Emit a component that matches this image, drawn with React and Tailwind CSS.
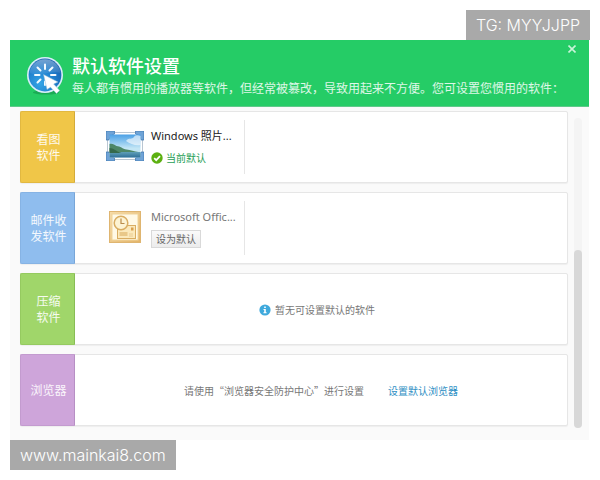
import clsx from 'clsx'

const CATEGORIES = [
  {
    id: 'image',
    lines: ['看图', '软件'],
    color: 'bg-[#f0c648] border-[#e2b840] border-r-[#d3ab3a]',
    app: { name: 'Windows 照片...', icon: PhotoIcon, isDefault: true },
  },
  {
    id: 'mail',
    lines: ['邮件收', '发软件'],
    color: 'bg-[#8fbdee] border-[#86b3e4] border-r-[#78a6d8]',
    app: { name: 'Microsoft Offic...', icon: OutlookIcon, isDefault: false },
  },
  {
    id: 'zip',
    lines: ['压缩', '软件'],
    color: 'bg-[#a0d66a] border-[#95ca60] border-r-[#88bd55]',
    empty: '暂无可设置默认的软件',
  },
  {
    id: 'browser',
    lines: ['浏览器'],
    color: 'bg-[#cea5da] border-[#c39bcf] border-r-[#b78fc4]',
    hint: '请使用“浏览器安全防护中心”进行设置',
    link: '设置默认浏览器',
  },
]

function ClickLogo() {
  return (
    <svg className="w-10 h-10 shrink-0" viewBox="0 0 40 40" aria-hidden="true">
      <defs>
        <radialGradient id="logoBlue" cx="0.35" cy="0.75" r="0.8">
          <stop offset="0" stopColor="#35a5e6" />
          <stop offset="0.6" stopColor="#1d7ccb" />
          <stop offset="1" stopColor="#1960ae" />
        </radialGradient>
        <linearGradient id="logoGloss" x1="0" y1="0" x2="0" y2="1">
          <stop offset="0" stopColor="#fff" stopOpacity="0.4" />
          <stop offset="1" stopColor="#fff" stopOpacity="0.05" />
        </linearGradient>
      </defs>
      <ellipse cx="21" cy="37.5" rx="13" ry="2" fill="#128a44" opacity="0.5" />
      <circle cx="20" cy="20" r="18" fill="#d9eefa" />
      <circle cx="20" cy="20" r="16.4" fill="url(#logoBlue)" />
      <path d="M4.5 18a15.6 15.6 0 0 1 31 0C27 15 14 22 4.5 18z" fill="url(#logoGloss)" />
      <path
        d="M20 9.500v4.500M12.500 12.500l3 3M27.500 12.500l-3 3M10 20h4.500M30.500 20h-4.500M12.500 27.500l3-3M20 30v-3.500"
        fill="none"
        stroke="#f4fbff"
        strokeWidth="2"
        strokeLinecap="round"
      />
      <path d="M18.500 19.500L33 27l-4.300 2 6 6.500-3.200 3-6-6.300L22 34.500z" fill="#fff" stroke="#8fb6d2" strokeWidth="0.5" />
    </svg>
  )
}

function PhotoIcon() {
  return (
    <svg className="w-[38px] h-[30px] shrink-0" viewBox="0 0 38 30" aria-hidden="true">
      <defs>
        <linearGradient id="sky" x1="0" y1="0" x2="0" y2="1">
          <stop offset="0" stopColor="#4aa0e6" />
          <stop offset="0.6" stopColor="#c3e6f5" />
        </linearGradient>
        <linearGradient id="sea" x1="0" y1="0" x2="0" y2="1">
          <stop offset="0" stopColor="#5f9fb8" />
          <stop offset="1" stopColor="#2f6f98" />
        </linearGradient>
      </defs>
      <rect x="1.5" y="1.5" width="35" height="27" fill="#fff" stroke="#b9c6d2" />
      <path
        d="M0 0h8.500v3L6 4 4 6 3 9H0zM38 0h-8.500v3l2.500 1 2 2 1 3H38zM0 30h8.500v-3L6 26l-2-2-1-3H0zM38 30h-8.500v-3l2.500-1 2-2 1-3H38z"
        fill="#6fa3d6"
        stroke="#3d74ad"
        strokeWidth="0.7"
      />
      <rect x="3.5" y="3.5" width="31" height="23" fill="url(#sky)" />
      <path d="M20 10c3-4 6-1 8-4s5-1 6.500-1v9c-5 1-10-1-14.500-4z" fill="#fff" opacity="0.6" />
      <path d="M3.500 21h31v5.500h-31z" fill="url(#sea)" />
      <path d="M3.500 13c3-1 5 1 7 2 4 0 6 3 10 3.500 4 .5 8 2 12 2.500h-29z" fill="#4d8768" />
      <path d="M3.500 17c4 0 6 3 12 5h-12z" fill="#35694c" />
    </svg>
  )
}

function OutlookIcon() {
  return (
    <svg className="w-8 h-8 shrink-0" viewBox="0 0 32 32" aria-hidden="true">
      <defs>
        <linearGradient id="gold" x1="0" y1="0" x2="1" y2="1">
          <stop offset="0" stopColor="#f6dcaa" />
          <stop offset="1" stopColor="#e3b468" />
        </linearGradient>
      </defs>
      <rect x="0.5" y="0.5" width="31" height="31" fill="url(#gold)" stroke="#dfb570" />
      <rect x="3" y="3" width="26" height="26" fill="#fff9e6" stroke="#f0d49a" />
      <rect x="8.500" y="14.500" width="18" height="13" fill="#fbe9bb" stroke="#d9ad62" />
      <rect x="10.500" y="21" width="8" height="4" fill="#e9c888" />
      <rect x="22" y="16.500" width="2.500" height="3" fill="#d9a04f" />
      <path d="M20 23h4M20 25h4" stroke="#eacb90" />
      <circle cx="12" cy="12" r="6.800" fill="#fdf3d2" stroke="#d9ad62" strokeWidth="1.500" />
      <path d="M12 7.500V12.500h3.500" fill="none" stroke="#b98b4a" strokeWidth="1.200" />
    </svg>
  )
}

function CheckIcon() {
  return (
    <svg className="w-3 h-3 shrink-0" viewBox="0 0 12 12" aria-hidden="true">
      <circle cx="6" cy="6" r="5.700" fill="#5cb010" />
      <path d="M3.200 6.200l2 2 3.800-4" fill="none" stroke="#fff" strokeWidth="1.700" />
    </svg>
  )
}

function InfoIcon() {
  return (
    <svg className="w-3 h-3 shrink-0" viewBox="0 0 12 12" aria-hidden="true">
      <circle cx="6" cy="6" r="5.600" fill="#3fa9dc" />
      <path d="M5.200 2.500h1.600v1.500H5.200zM4.500 5h2.300v3.200h.8v1H4.400v-1h.8V6h-.7z" fill="#fff" />
    </svg>
  )
}

function AppItem({ app }) {
  const Icon = app.icon
  return (
    <div className="w-[170px] my-2 flex items-center border-r border-[#e6e6e6]">
      <div className="w-[76px] pl-6 pb-0.5 flex justify-center shrink-0">
        <Icon />
      </div>
      <div className="min-w-0 pt-0.5">
        <p className={clsx('text-[11px] leading-4 whitespace-nowrap', app.isDefault ? 'text-[#222]' : 'text-[#777]')}>{app.name}</p>
        <div className="h-5 mt-1 flex items-center">
          {app.isDefault ? (
            <span className="flex items-center gap-[3px] text-[10px] leading-4 text-[#1f9e55]">
              <CheckIcon />
              当前默认
            </span>
          ) : (
            <button className="h-[18px] px-1 border border-[#d9d9d9] bg-linear-to-b from-[#fafafa] to-[#ececec] text-[10px] leading-4 text-[#666]">
              设为默认
            </button>
          )}
        </div>
      </div>
    </div>
  )
}

function CategoryRow({ category }) {
  const { lines, color, app, empty, hint, link } = category
  return (
    <li className="h-[72px] flex rounded-xs border border-[#e6e6e6] bg-white shadow-[0_1px_1px_#eee]">
      <h2 className={clsx('w-[55px] -my-px -ml-px shrink-0 rounded-l-xs border flex flex-col items-center justify-center pt-0.5 pl-0.5 text-xs leading-4 text-white/90', color)}>
        {lines.map(line => <span key={line}>{line}</span>)}
      </h2>
      {app && <AppItem app={app} />}
      {empty && (
        <p className="flex-1 pt-0.5 pr-2 flex items-center justify-center gap-1 text-[10px] leading-4 text-[#777]">
          <InfoIcon />
          {empty}
        </p>
      )}
      {link && (
        <div className="flex-1 pt-0.5 flex items-center justify-center gap-6 text-[10px] leading-4 text-[#777]">
          <p className="font-['Noto_Sans_CJK_SC',sans-serif]">{hint}</p>
          <a href="#browser" className="text-[#2f8fc4]">{link}</a>
        </div>
      )}
    </li>
  )
}

function Tag({ children, className }) {
  return (
    <p className={clsx("px-2.5 text-base leading-[30px] font-light bg-[#a9a9a9] text-white font-['Inter',sans-serif]", className)}>
      {children}
    </p>
  )
}

export default function App() {
  return (
    <div lang="zh-CN" className="p-2.5 flex flex-col bg-white font-['Noto_Sans','Noto_Sans_CJK_SC',sans-serif]">
      <Tag className="self-end">TG: MYYJJPP</Tag>

      <main className="mr-px bg-[#fafafa]">
        <header className="relative h-[67px] pt-1 pl-[15px] flex items-center gap-[7px] bg-[#25cc66] border-b border-[#5fc98a] text-white">
          <ClickLogo />
          <div className="pt-1">
            <h1 className="text-lg leading-6 font-medium">默认软件设置</h1>
            <p className="text-xs leading-[22px] text-white/85 whitespace-nowrap">
              每人都有惯用的播放器等软件，但经常被篡改，导致用起来不方便。您可设置您惯用的软件：
            </p>
          </div>
          <button aria-label="关闭" className="absolute top-1 right-3 p-px">
            <svg className="w-2 h-2" viewBox="0 0 8 8" aria-hidden="true">
              <path d="M0.500 0.500l7 7M7.500 0.500l-7 7" stroke="#c9f4d9" strokeWidth="1.600" />
            </svg>
          </button>
        </header>

        {/* List and its scrollbar */}
        <div className="pt-1 pb-3 pl-2.5 pr-[7px] flex gap-1.5">
          <ul className="flex-1 mb-0.5 flex flex-col gap-[9px]">
            {CATEGORIES.map(c => <CategoryRow key={c.id} category={c} />)}
          </ul>
          <div className="w-2 mt-[7px] rounded-full bg-[#f4f4f4] flex flex-col justify-end">
            <div className="h-[178px] rounded-full bg-[#d8d8d8]" />
          </div>
        </div>
      </main>

      <Tag className="self-start">www.mainkai8.com</Tag>
    </div>
  )
}
